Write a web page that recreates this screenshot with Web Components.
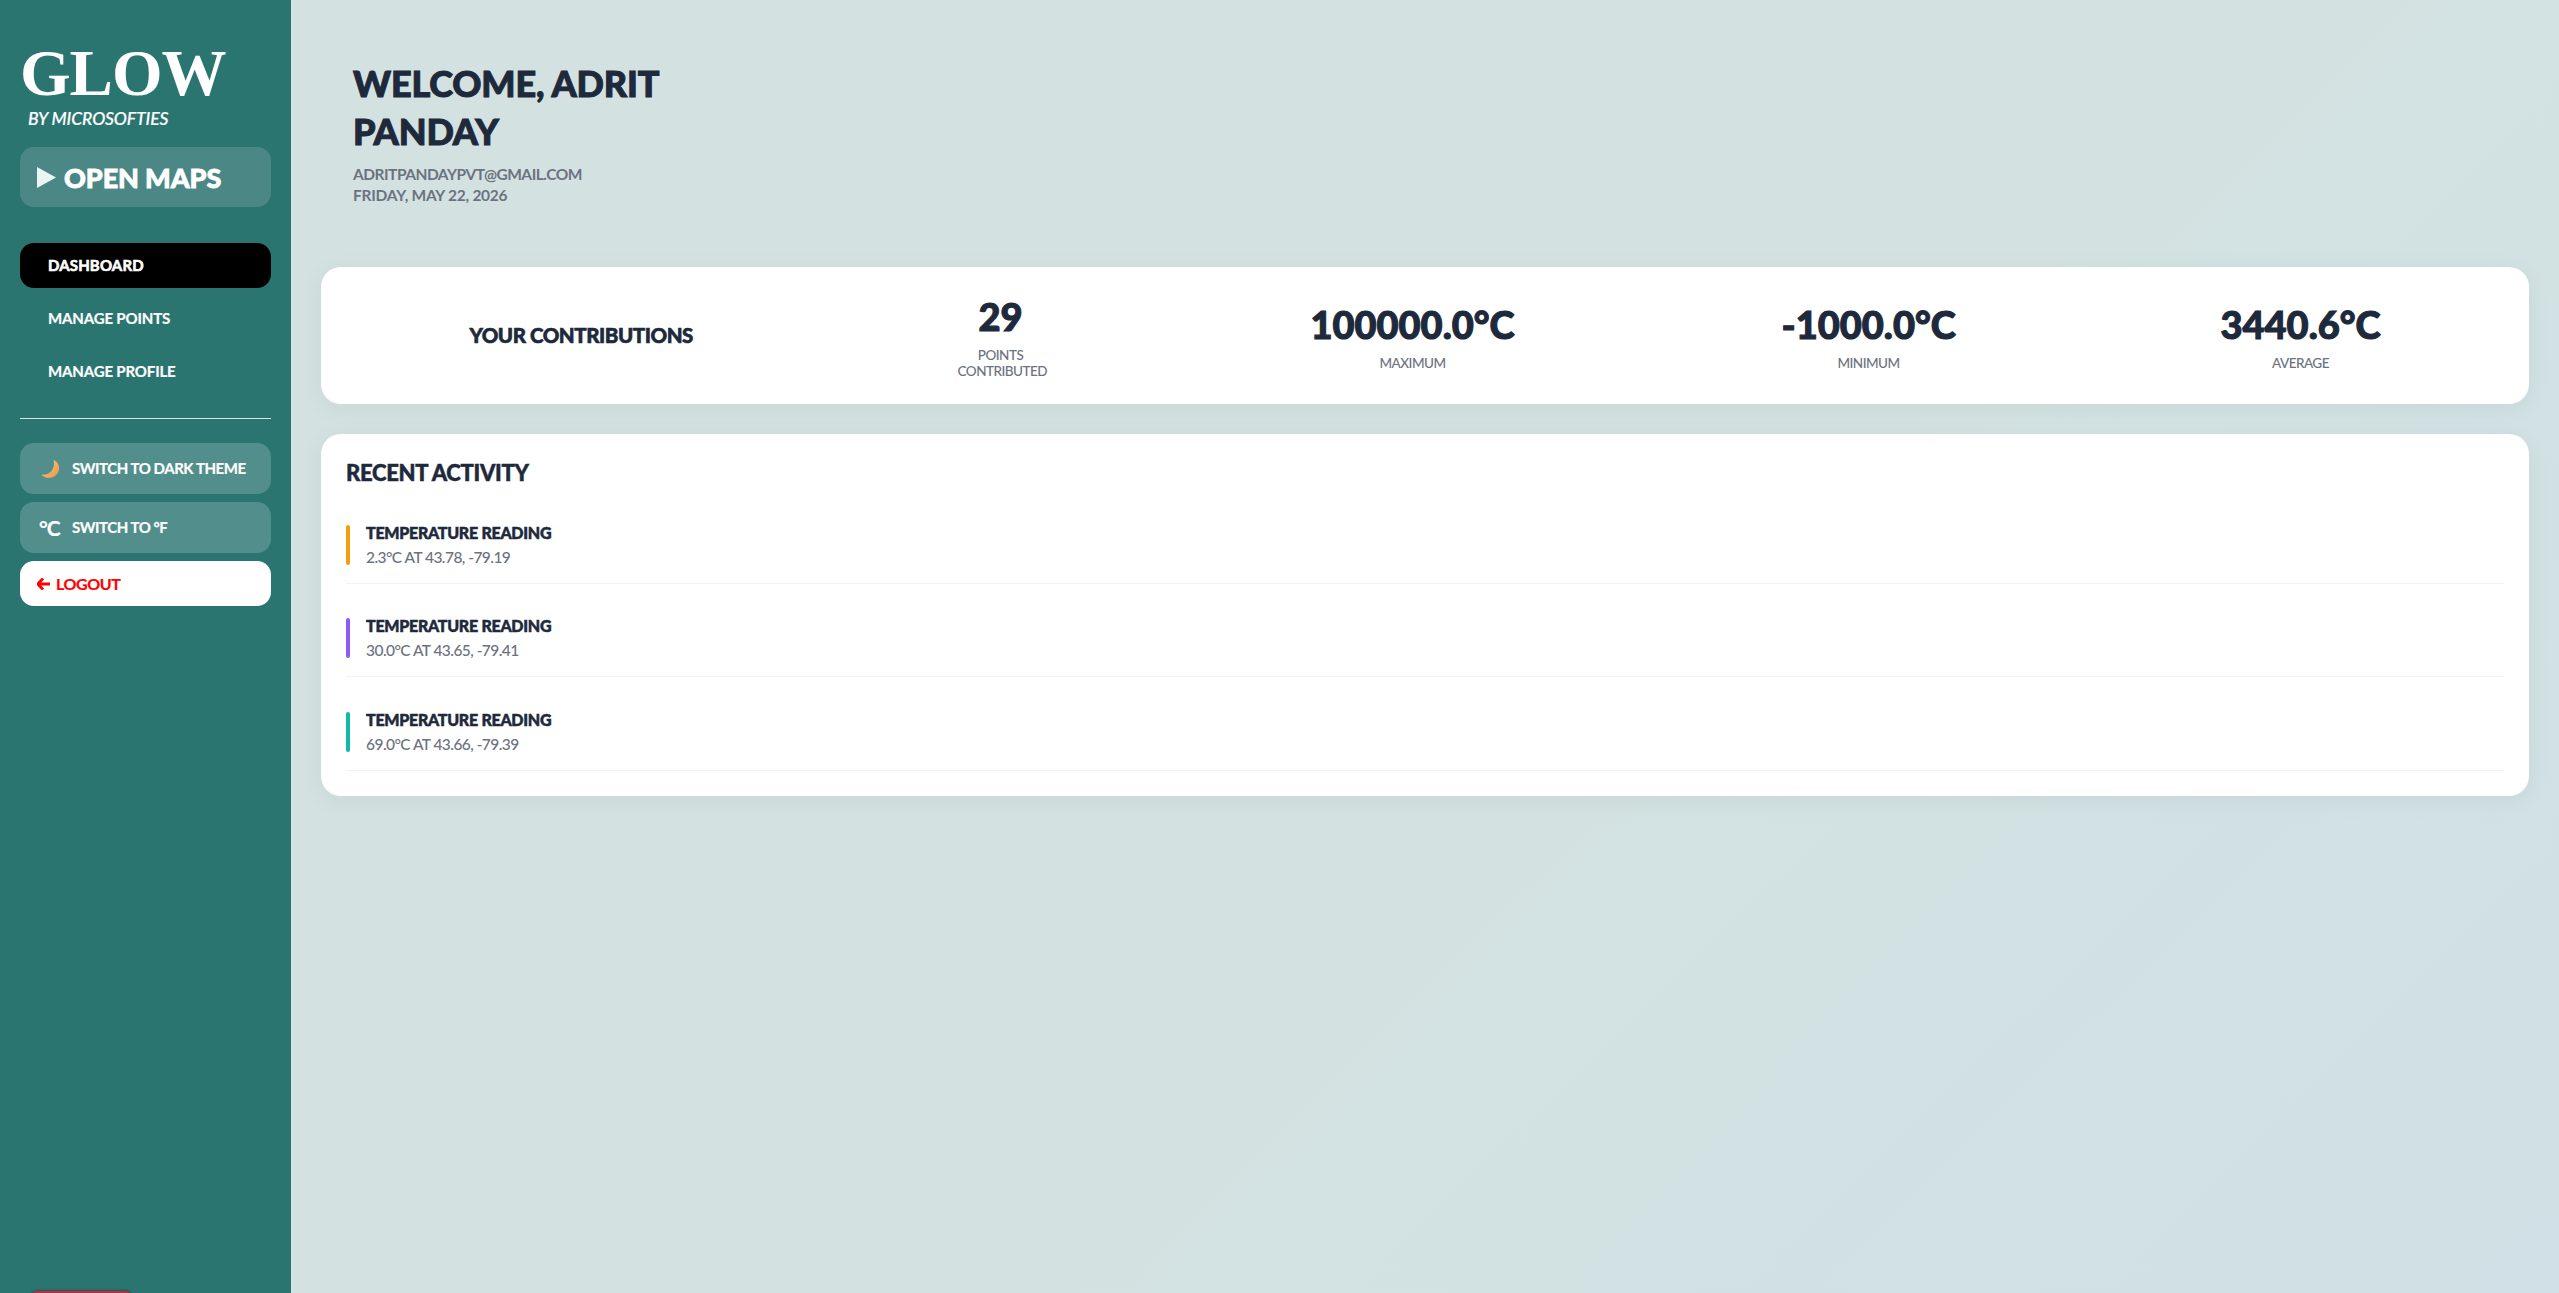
<!DOCTYPE html>
<html><head><meta charset="utf-8"><title>Glow</title>
<style>
html,body{margin:0;height:100%;overflow:hidden}
body{font-family:"Lato","Liberation Sans",sans-serif;background:#d3e2e1;color:#1e293b}
</style></head><body>
<glow-app>
  <glow-sidebar slot="side">
    <nav-item active>DASHBOARD</nav-item>
    <nav-item>MANAGE POINTS</nav-item>
    <nav-item>MANAGE PROFILE</nav-item>
    <side-button slot="tools"><svg slot="icon" width="20" height="20" viewBox="0 0 20 20"><defs><linearGradient id="m" x1="0" y1="0" x2="1" y2="1"><stop offset="0" stop-color="#fbd176"/><stop offset="1" stop-color="#e8934a"/></linearGradient></defs><path d="M13.500 1C17.500 2.500 19.500 6 19 10.500C18.300 15.800 13.500 19 8.500 19C5.800 19 3 17.800 1.500 15.500C5 16.300 9 15 11.500 12C13.800 9 14.800 5 13.500 1Z" fill="url(#m)"/></svg>SWITCH TO DARK THEME</side-button>
    <side-button slot="tools"><span slot="icon" style="font-size:21px;font-weight:700;letter-spacing:-1px;margin-left:-1px">°C</span>SWITCH TO °F</side-button>
    <logout-button slot="tools">LOGOUT</logout-button>
  </glow-sidebar>
  <welcome-header slot="main" name="WELCOME, ADRIT PANDAY" email="ADRITPANDAYPVT@GMAIL.COM" date="FRIDAY, MAY 22, 2026"></welcome-header>
  <stats-card slot="main">
    <stat-item w="223" title-only value="YOUR CONTRIBUTIONS"></stat-item>
    <stat-item w="86" value="29" label="POINTS CONTRIBUTED"></stat-item>
    <stat-item w="208" value="100000.0°C" label="MAXIMUM"></stat-item>
    <stat-item w="174" value="-1000.0°C" label="MINIMUM"></stat-item>
    <stat-item w="160" value="3440.6°C" label="AVERAGE"></stat-item>
  </stats-card>
  <activity-card slot="main" heading="RECENT ACTIVITY">
    <activity-item color="#f59e0b" title="TEMPERATURE READING" detail="2.3°C AT 43.78, -79.19"></activity-item>
    <activity-item color="#8b5cf6" title="TEMPERATURE READING" detail="30.0°C AT 43.65, -79.41"></activity-item>
    <activity-item color="#14b8a6" title="TEMPERATURE READING" detail="69.0°C AT 43.66, -79.39"></activity-item>
  </activity-card>
</glow-app>
<script>
function def(name, html, init){
  customElements.define(name, class extends HTMLElement{
    constructor(){super();this.attachShadow({mode:'open'}).innerHTML=html;}
    connectedCallback(){ if(init) init(this, this.shadowRoot); }
  });
}
def('glow-app',`<style>
:host{display:flex;width:100%;height:100vh;background:linear-gradient(135deg,#d3e2e1 0%,#d3e2e1 60%,#d0e0e6 100%);overflow:hidden}
main{flex:1;min-width:0;padding:0 30px 0 30px;display:flex;flex-direction:column}
</style><slot name="side"></slot><main><slot name="main"></slot></main>`);

def('glow-sidebar',`<style>
:host{display:flex;flex-direction:column;flex:0 0 251px;height:1293px;box-sizing:content-box;padding:0 20px;background:#2b7571;color:#fff;position:relative;overflow:hidden}
.logo{font:700 65px/66px "Liberation Serif",serif;margin-top:40px;letter-spacing:-1px;height:66px}
.by{font:italic 500 17.500px/20px "Lato",sans-serif;margin:3px 0 0 8px;letter-spacing:-.1px;height:20px;-webkit-text-stroke:.2px #fff}
.maps{display:flex;align-items:center;gap:8px;height:60px;margin-top:18px;padding-left:17px;border-radius:14px;background:#4b8784;font:900 27px/1 "Lato",sans-serif;letter-spacing:-.1px;-webkit-text-stroke:.8px #fff}
nav{display:flex;flex-direction:column;gap:8px;margin-top:36px}
hr{border:0;height:1px;background:#dbe7e6;margin:24px 0 24px;width:100%}
.tools{display:flex;flex-direction:column;gap:8px}
.badge{position:absolute;left:30px;top:1291px;width:103px;height:40px;border-radius:8px;background:#b5303f;box-shadow:0 0 2px 1px #2a4f54}
</style>
<div class="logo">GLOW</div><div class="by">BY MICROSOFTIES</div>
<div class="maps"><svg width="19" height="21" viewBox="0 0 19 21"><path d="M0 0L19 10.500L0 21Z" fill="#eaf6f6"/></svg>OPEN MAPS</div>
<nav><slot></slot></nav><hr><div class="tools"><slot name="tools"></slot></div><div class="badge"></div>`);

def('nav-item',`<style>
:host{display:flex;align-items:center;height:45px;padding-left:28px;border-radius:14px;font:700 15px/1 "Lato",sans-serif;letter-spacing:-.15px;color:#fff;-webkit-text-stroke:.2px #fff}
:host([active]){background:#000;letter-spacing:.15px;-webkit-text-stroke:.6px #fff}
</style><slot></slot>`);

def('side-button',`<style>
:host{display:flex;align-items:center;height:51px;border-radius:14px;background:#528f8c;color:#fff;font:700 15px/1 "Lato",sans-serif;letter-spacing:-.45px;-webkit-text-stroke:.2px #fff}
.i{flex:0 0 32px;margin-left:20px;display:flex;align-items:center}
</style><span class="i"><slot name="icon"></slot></span><slot></slot>`);

def('logout-button',`<style>
:host{display:flex;align-items:center;gap:6px;height:45px;border-radius:14px;background:#fff;color:#f00;padding-left:17px;font:700 16px/1 "Lato",sans-serif;letter-spacing:-.4px;-webkit-text-stroke:.2px #f00}
</style><svg width="13" height="12" viewBox="0 0 13 12"><path d="M6 .5L.8 6L6 11.500M1.500 6H13" fill="none" stroke="#f00" stroke-width="2.800"/></svg><slot></slot>`);

def('welcome-header',`<style>
:host{display:block;height:267px;box-sizing:border-box;padding:59px 0 0 32px}
h1{margin:0;width:330px;font:900 36px/48px "Lato",sans-serif;color:#1e293b;letter-spacing:-.15px;-webkit-text-stroke:1px #1e293b}
p{margin:0;font:700 15.500px/21px "Lato",sans-serif;color:#6b7280}
.e{margin-top:9px;letter-spacing:-.5px}
.d{letter-spacing:-.25px}
</style><h1></h1><p class="e"></p><p class="d"></p>`,(h,s)=>{
  s.querySelector('h1').textContent=h.getAttribute('name');
  s.querySelector('.e').textContent=h.getAttribute('email');
  s.querySelector('.d').textContent=h.getAttribute('date');
});

def('stats-card',`<style>
:host{display:flex;align-items:center;justify-content:space-around;box-sizing:border-box;height:137px;padding:0 16px;background:#fff;border-radius:20px;box-shadow:0 4px 24px rgba(0,0,0,.05)}
</style><slot></slot>`);

def('stat-item',`<style>
:host{display:block;flex:none;text-align:center;padding-top:3px}
.v{font:900 38px/40px "Lato",sans-serif;color:#1e293b;white-space:nowrap;letter-spacing:0;-webkit-text-stroke:1.1px #1e293b}
.l{font:500 13.500px/16px "Lato",sans-serif;color:#6b7280;margin-top:11px;letter-spacing:-.5px}
:host([title-only]){padding-top:0;margin-top:-2px}
:host([title-only]) .v{font:900 20.500px/26px "Lato",sans-serif;letter-spacing:-.45px;-webkit-text-stroke:.6px #1e293b}
:host([title-only]) .l{display:none}
</style><div class="v"></div><div class="l"></div>`,(h,s)=>{
  h.style.width=h.getAttribute('w')+'px';
  s.querySelector('.v').textContent=h.getAttribute('value');
  s.querySelector('.l').textContent=h.getAttribute('label')||'';
});

def('activity-card',`<style>
:host{display:block;box-sizing:border-box;height:362px;margin-top:30px;padding:24px 25px 0;background:#fff;border-radius:20px;box-shadow:0 4px 24px rgba(0,0,0,.05)}
h2{margin:0 0 2px;font:900 22px/30px "Lato",sans-serif;color:#1e293b;letter-spacing:-.3px;-webkit-text-stroke:.5px #1e293b}
</style><h2></h2><slot></slot>`,(h,s)=>{s.querySelector('h2').textContent=h.getAttribute('heading');});

def('activity-item',`<style>
:host{display:flex;align-items:flex-start;gap:16px;padding:34.500px 0 18px;border-bottom:1px solid #f1f3f4}
.bar{flex:0 0 4px;height:40px;border-radius:2px}
.txt{margin-top:-1px}
.t{font:900 16px/18px "Lato",sans-serif;color:#1e293b;letter-spacing:-.28px;-webkit-text-stroke:.5px #1e293b}
.d{font:500 15.500px/14px "Lato",sans-serif;color:#6b7280;margin-top:8px;letter-spacing:-.55px}
</style><div class="bar"></div><div class="txt"><div class="t"></div><div class="d"></div></div>`,(h,s)=>{
  s.querySelector('.bar').style.background=h.getAttribute('color');
  s.querySelector('.t').textContent=h.getAttribute('title');
  s.querySelector('.d').textContent=h.getAttribute('detail');
});
</script>
</body></html>
